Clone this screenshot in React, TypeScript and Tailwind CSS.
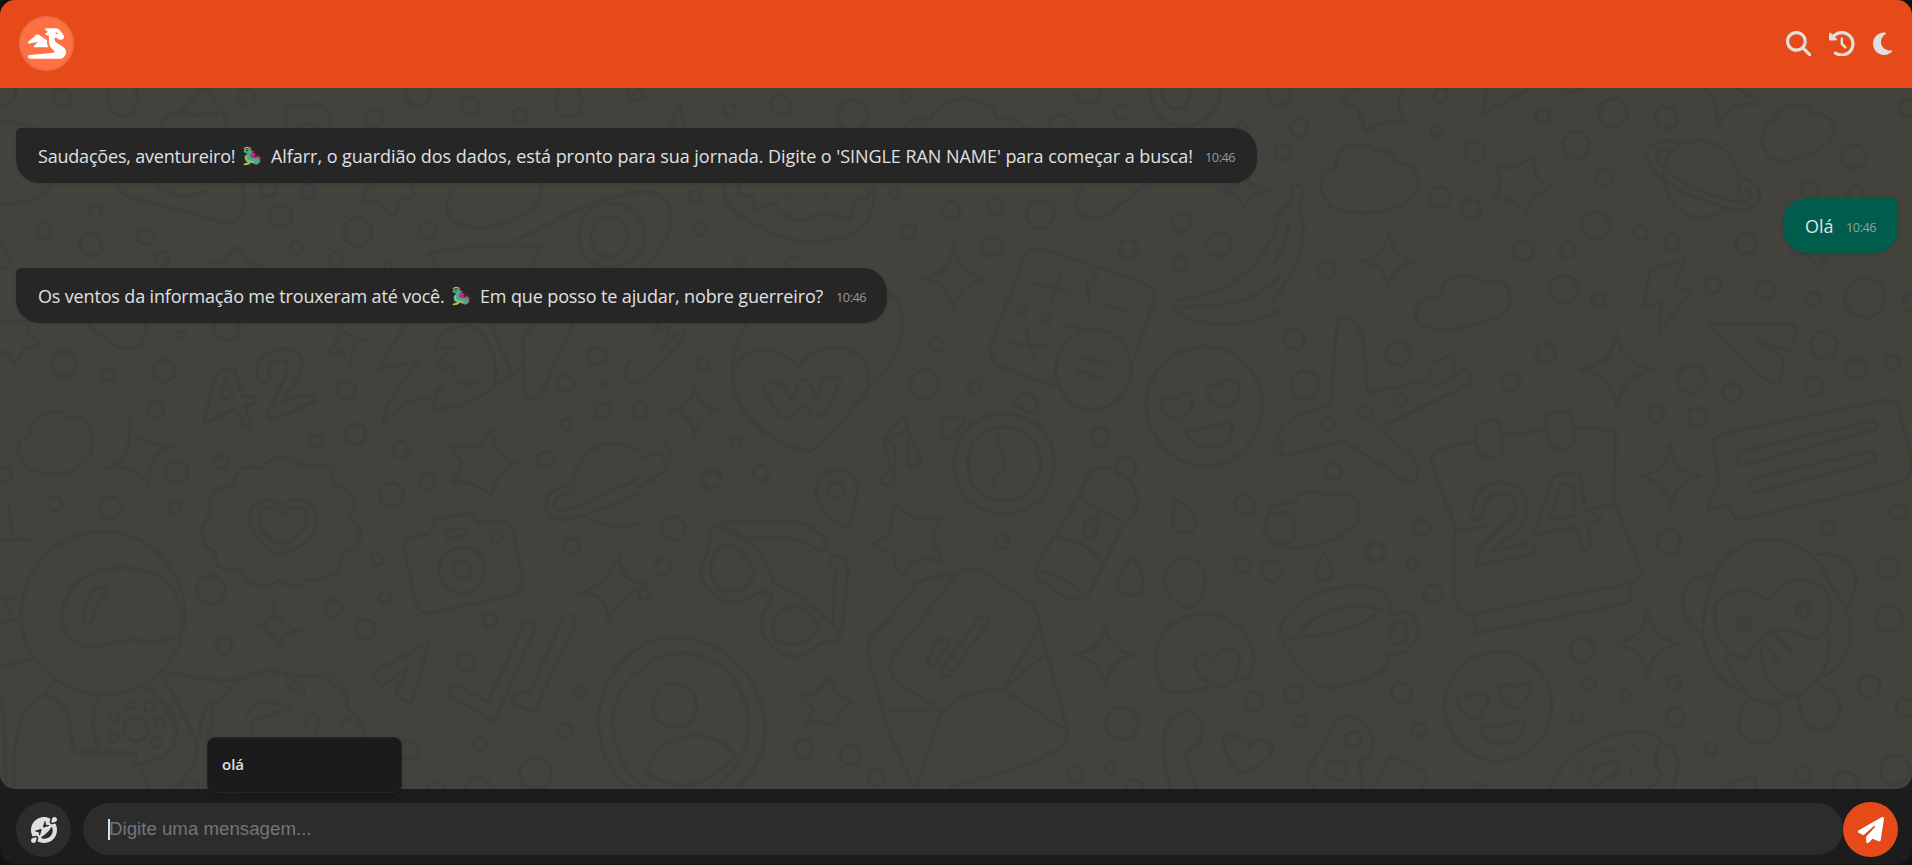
import { FaMagnifyingGlass, FaClockRotateLeft, FaMoon, FaDragon, FaFaceGrinSquintTears, FaPaperPlane } from "react-icons/fa6";

type Tile = { x: number; y: number; circles: number[][]; paths: string[] };

const star4 = (x: number, y: number, w: number, h: number, t = 0) =>
  `M${x + t} ${y - h}Q${x + w * 0.12} ${y - h * 0.12} ${x + w} ${y - t}Q${x + w * 0.12} ${y + h * 0.12} ${x - t} ${y + h}Q${x - w * 0.12} ${y + h * 0.12} ${x - w} ${y + t}Q${x - w * 0.12} ${y - h * 0.12} ${x + t} ${y - h}Z`;

/* Doodles are laid out on tiles of 2.45 x 3 units per pixel. */
const tiles: Tile[] = [
  {
    x: 0, y: 80,
    circles: [
      [152, 53, 9], [604, 52, 8], [1024, 42, 12], [1152, 78, 9], [1273, 106, 7], [918, 114, 9], [0, 30, 16],
      [235, 393, 6], [222, 495, 11], [356, 469, 8], [397, 535, 7], [658, 327, 8], [754, 335, 7], [688, 407, 11],
      [876, 456, 14], [1048, 450, 9], [728, 502, 6], [824, 535, 7], [157, 852, 13], [265, 886, 6], [403, 872, 11],
      [555, 740, 13], [443, 765, 4], [850, 932, 9], [381, 990, 8], [871, 1062, 10], [775, 1082, 6], [982, 1108, 8],
      [1463, 828, 9], [1387, 908, 8], [1477, 993, 8], [1387, 1033, 5], [1474, 912, 3], [1336, 1138, 8], [542, 1146, 7], [433, 1176, 11],
      [1555, 42, 7],
    ],
    paths: [
      "M267 24C255 70 275 108 300 108C330 108 345 70 332 24",
      "M1370 30C1350 75 1370 110 1393 110C1425 110 1435 65 1415 30",
      "M395 144C400 105 420 100 440 100L490 30Q500 15 515 35L535 80Q542 98 550 105L552 144M440 100Q490 112 530 98",
      "M700 144L702 90Q720 65 742 85Q765 60 800 85Q815 100 808 144M722 144Q745 120 780 144",
      "M0 128C60 120 110 150 130 200C180 300 100 380 0 370",
      "M285 300Q290 345 330 355L560 430C600 420 610 350 590 310M380 308C400 350 460 360 500 335",
      "M100 420Q90 440 92 460C100 485 125 480 125 455Q125 440 100 420Z",
      "M0 490Q30 530 20 555Q10 570 0 565",
      "M902 308L889 365Q930 360 937 380L965 410L978 362L1018 348Q1000 330 1010 308",
      "M1108 330Q1080 390 1110 420C1150 460 1210 440 1240 425Q1340 390 1325 308",
      "M1250 490L1380 410Q1470 350 1568 335M1050 520Q1150 490 1320 500Q1320 530 1295 564M1050 520L1080 564",
      "M1492 370C1440 370 1415 420 1418 475C1420 530 1460 562 1492 562C1540 562 1580 520 1580 470C1580 410 1540 370 1492 370ZM1492 408C1460 408 1448 440 1448 475C1450 510 1470 530 1492 530C1520 530 1538 505 1538 470C1538 435 1520 408 1492 408Z",
      "M510 550H545L580 500L610 550L645 560M940 564L950 535L965 564",
      "M210 728Q250 770 285 800C320 820 370 790 355 730M0 720Q30 730 45 728Q70 710 70 760L95 795L60 805L35 850L20 820L0 815",
      "M500 1020L530 880Q545 860 575 870L595 950Q625 945 625 960Q625 975 600 975L615 1030Q610 1050 595 1035L580 985L520 1020Q505 1030 500 1020ZM540 960L553 890L570 950Z",
      "M630 900C620 840 660 800 705 808C750 815 750 870 720 910L690 965L750 945Q780 945 770 965L670 1020Q650 1015 660 990L700 890C715 850 700 835 680 840Q655 850 660 895Q645 915 630 900Z",
      "M835 728Q840 775 900 780Q850 795 860 860L840 815L800 820Q830 800 830 728",
      "M995 730L925 868L1025 845Q935 970 940 1040C970 970 1020 950 1055 955L1085 915L1055 985C1150 990 1190 940 1215 915C1220 830 1200 770 1150 735C1090 740 1060 780 1070 810L1120 800Q1060 850 1080 870L1110 860C1110 920 1150 920 1170 900M1200 730L1255 880L1215 915",
      "M1405 728L1330 930Q1310 975 1285 940L1280 770L1310 730M1280 860L1220 910",
      "M95 1010C130 980 160 1000 165 1015C210 1000 230 1050 228 1085C225 1150 165 1200 105 1180C50 1165 40 1120 45 1095Q50 1070 75 1068Q70 1030 95 1010Z",
      "M315 1015Q325 1100 425 1100Q360 1110 365 1230Q350 1150 258 1165Q330 1150 315 1015Z",
      "M1205 1050L1165 1105Q1130 1090 1105 1100L1130 1150L1110 1210Q1140 1205 1155 1210Q1190 1230 1205 1245L1220 1190L1262 1150Q1220 1130 1215 1100Z",
      "M1530 900Q1525 870 1545 840M1530 900Q1545 910 1568 905",
    ],
  },
  {
    x: 640, y: 80,
    circles: [
      [220, 90, 6], [345, 75, 10], [521, 105, 15], [651, 50, 5], [1180, 97, 7], [134, 353, 6], [147, 445, 7], [0, 45, 6],
      [624, 340, 5], [659, 453, 7], [762, 392, 9], [871, 380, 8], [981, 402, 14], [862, 500, 10], [1196, 507, 9], [1327, 428, 10],
      [1417, 493, 12], [1322, 548, 7], [245, 550, 5], [375, 550, 7], [727, 793, 7], [154, 855, 6], [697, 913, 14], [818, 921, 6],
      [235, 1088, 5], [1127, 1070, 9], [0, 990, 8], [295, 1175, 7], [175, 1195, 9], [1560, 1105, 5], [935, 695, 4], [995, 718, 4], [1568, 50, 11],
    ],
    paths: [
      "M75 144L95 70L110 144M650 135Q670 110 710 120C740 30 860 40 875 115Q920 110 945 144M1000 144C1010 90 1050 90 1065 144",
      "M1065 40Q1080 75 1100 72Q1125 70 1125 35M1250 30C1250 110 1300 144 1340 140C1390 130 1425 80 1420 30M1275 30C1290 80 1300 90 1315 88Q1350 80 1350 30M1460 144L1475 122L1490 144",
      "M0 335C70 325 90 400 65 470Q40 530 10 564M205 310C200 380 240 410 310 450C350 480 400 490 460 480C550 470 570 430 575 320M240 310L245 345L275 350L285 390L330 370Q355 420 400 420L440 400L515 415L525 360Q570 360 560 330M360 345L380 360M445 360L460 345",
      "M1080 325Q1060 380 1075 400C1110 430 1150 410 1170 380L1245 310",
      star4(770, 595, 78, 105), star4(1480, 330, 65, 55), star4(134, 992, 62, 78),
      "M950 515Q960 500 990 508L1235 610Q1265 630 1260 665L1210 840M950 515Q930 540 925 590L860 790Q855 845 885 860L1020 920",
      "M1110 750C1060 745 1020 800 1018 870C1020 940 1060 990 1110 988C1165 985 1205 930 1203 860C1200 790 1160 750 1110 750Z",
      "M1085 830L1145 855M1070 870L1135 900M1110 570L1120 600L1095 600L1100 670M1130 670L1200 700M1050 740H1075V765M965 610L1050 640M1035 570L1005 670M910 790L995 800M945 740L965 840",
      "M1568 400Q1560 480 1500 560Q1430 650 1320 660Q1300 680 1315 700C1390 750 1500 740 1568 690M1568 590Q1490 690 1320 680",
      "M610 640C660 680 650 780 610 860Q590 900 555 930M265 728C220 800 220 900 235 950C260 1030 340 1100 415 1115Q440 1100 550 945C575 880 550 820 500 805Q430 790 385 860Q350 800 270 815Q230 840 230 900",
      "M300 920Q300 905 350 910L370 960L395 900L410 900L435 960L450 890L490 895Q490 910 470 960L450 1005L425 1010L400 970L375 1010L345 1010Z",
      "M1385 800C1310 800 1245 870 1240 965C1240 1080 1310 1160 1390 1158C1465 1155 1525 1075 1525 965C1520 880 1460 800 1385 800Z",
      "M1275 975Q1280 945 1315 955Q1330 930 1350 945C1365 980 1330 1015 1315 1022Q1280 1010 1275 975ZM1390 930Q1400 905 1425 915Q1445 890 1465 905C1480 940 1450 980 1430 985Q1390 970 1390 930ZM1335 1050Q1400 1050 1448 1020C1460 1070 1440 1100 1400 1098C1360 1100 1340 1075 1335 1050Z",
      "M890 1000C820 1000 770 1070 770 1150C770 1250 830 1300 890 1300C960 1300 1015 1240 1015 1150C1015 1060 960 1000 890 1000ZM890 1040C840 1040 803 1090 803 1150C803 1220 840 1262 890 1262C945 1262 982 1210 982 1150C982 1090 940 1040 890 1040Z",
      "M880 1070C870 1110 900 1110 890 1170Q870 1190 865 1210",
      "M645 1010L595 1080L615 1165M645 1010L660 1060L685 1130M600 1080L655 1050M660 1130Q650 1165 675 1160Q695 1150 680 1120",
      "M738 1050Q740 1010 765 1010Q800 1005 795 1030Q760 1080 745 1080Q735 1070 738 1050ZM915 970Q920 940 950 940Q980 960 975 1000L950 998Z",
      "M45 728L30 760L75 740L55 800L110 750Q110 790 0 905",
    ],
  },
  {
    x: 1272, y: 80,
    circles: [
      [415, 45, 7], [66, 143, 9], [28, 217, 8], [404, 152, 6], [496, 215, 10], [663, 108, 7], [836, 98, 14], [966, 113, 11], [745, 195, 13],
      [814, 294, 9], [411, 352, 10], [487, 388, 10], [793, 437, 14], [904, 460, 7], [980, 484, 8], [616, 512, 10], [724, 508, 8], [133, 570, 8],
      [714, 627, 14], [799, 658, 7], [1080, 614, 8], [1208, 630, 9], [1326, 658, 7], [1161, 491, 10], [1426, 229, 12], [1318, 330, 9], [1430, 345, 8],
      [1453, 653, 20], [1568, 667, 9], [1352, 795, 13], [1431, 867, 10], [1520, 847, 7], [1328, 920, 9], [1028, 898, 14], [1127, 938, 9], [942, 1003, 8],
      [1041, 1010, 9], [671, 820, 10], [586, 906, 9], [308, 820, 12], [55, 777, 10], [81, 914, 14], [228, 997, 7], [317, 960, 6], [136, 1033, 7], [150, 1173, 8], [1555, 85, 8], [17, 40, 12],
    ],
    paths: [
      "M205 24Q170 50 172 70Q215 80 215 110L230 155Q270 120 325 122Q300 80 320 24M530 24L512 105L635 24M715 30Q735 45 760 30M1060 24Q1090 50 1090 100L1095 138Q1110 60 1203 72L1140 24",
      "M155 270Q160 190 210 195Q240 195 250 215Q290 200 305 245C360 255 365 300 350 340C310 410 190 410 145 380Q110 330 120 295Q130 265 155 270Z",
      "M545 260Q600 270 610 250L640 228L648 295L685 320Q650 345 640 350L622 402Q600 350 545 358Q570 310 545 260Z",
      "M1230 120C1240 70 1310 55 1325 100C1380 100 1390 160 1360 190C1310 235 1260 260 1220 230C1180 190 1210 125 1230 120Z",
      "M960 290C960 210 1000 180 1050 182C1110 185 1150 250 1143 345M960 290C965 370 1010 415 1050 412Q1090 410 1115 385",
      "M1000 185Q940 175 920 210C900 260 980 330 1080 370C1140 400 1190 400 1195 350C1200 310 1160 300 1143 290M985 210Q930 200 945 245C990 310 1080 355 1140 365Q1190 360 1165 330",
      "M415 650C410 580 480 565 525 610C580 585 595 650 575 690C530 740 400 770 360 730C335 680 370 650 415 650Z",
      "M925 570L1012 538L985 620L1025 635L948 762L955 665L912 680Z",
      "M1070 730L1280 735Q1290 760 1268 815L1190 785L1255 835L1245 900Q1230 915 1210 900Z",
      star4(286, 543, 66, 85), star4(845, 870, 90, 110), star4(975, 1190, 75, 95), "M1270 524L1310 524L1340 570L1360 524",
      "M0 420Q20 390 45 370L50 320Q70 310 80 330L65 380C90 430 80 550 0 665M0 560Q35 490 42 425",
      "M145 970L160 715Q210 705 225 790L235 940L380 900M445 895L470 870Q495 880 480 915L260 1045C340 1120 365 1150 355 1185Q350 1220 330 1205L180 1085L30 1125Q0 1120 12 1080Q20 1030 60 1010L145 970",
      "M380 895L395 850L435 825Q450 830 445 890L400 925Z",
      "M500 1040Q520 1010 555 1025Q570 1080 565 1120Q540 1140 510 1125Q495 1080 500 1040ZM672 1010Q690 985 730 1000Q745 1050 740 1090Q715 1120 685 1100Q668 1060 672 1010Z",
      "M500 1085Q385 1105 390 1140L450 1350Q440 1550 455 1580Q480 1610 500 1600L880 1510Q905 1500 905 1470L840 1275L842 1050L745 1042M568 1065L675 1050M450 1350L520 1340M840 1275L775 1285",
      "M490 1605L500 1660L870 1570Q885 1560 875 1520",
      "M490 1310C490 1230 530 1200 570 1208C620 1215 640 1280 610 1340L535 1415L620 1390Q655 1395 640 1425L500 1455L510 1400L590 1310C610 1250 580 1240 550 1240Q520 1250 515 1310Q500 1330 490 1310Z",
      "M645 1350L690 1190Q720 1175 755 1185L768 1290L805 1310Q810 1325 775 1335L780 1400Q765 1420 755 1395L745 1340L660 1360Q645 1365 645 1350ZM680 1320L710 1210L740 1220L742 1305Z",
      "M1080 1090Q1085 1070 1110 1060L1500 960Q1530 960 1535 990L1568 1130Q1570 1190 1545 1205L1145 1320Q1130 1320 1120 1275L1065 1295L1095 1200Z",
      "M1150 1115L1470 1022Q1490 1035 1475 1050L1155 1155Q1130 1150 1150 1115ZM1180 1195L1460 1115Q1490 1125 1475 1145L1190 1235Q1155 1230 1180 1195Z",
    ],
  },
  {
    x: 0, y: 440,
    circles: [
      [134, 191, 7], [270, 202, 11], [429, 201, 6], [517, 449, 14], [960, 165, 12], [1047, 125, 8], [925, 357, 6], [944, 474, 6], [817, 505, 9],
      [896, 568, 10], [549, 615, 8], [1400, 319, 8], [1201, 541, 7], [1141, 666, 9], [1420, 755, 6], [1386, 872, 7], [1174, 912, 7], [1312, 1000, 16], [1000, 930, 10],
      [1172, 1050, 13], [1068, 1055, 10], [9, 105, 8], [333, 867, 12], [319, 794, 4], [365, 800, 5], [280, 832, 5], [392, 848, 5], [280, 892, 5], [381, 908, 5],
      [1132, 390, 23], [1132, 390, 9], [1216, 290, 5],
    ],
    paths: [
      "M250 275C130 275 50 400 52 530C55 670 150 765 260 765C370 760 455 650 452 520C450 390 370 275 250 275Z",
      "M155 560C140 450 210 385 300 383C380 385 440 430 445 530L440 590Q390 610 320 598C260 610 190 660 155 560ZM205 520C210 460 240 435 255 440Q270 450 240 490L225 550Q195 560 205 520Z",
      "M0 300H70Q40 300 30 280L20 190M0 470L45 480M15 490L35 540M0 550Q25 540 50 540M0 680L75 660M0 760C20 900 10 960 15 1047M35 1047C30 850 60 780 110 765C160 780 175 830 178 935L330 938Q340 960 325 970C370 980 460 930 425 830Q400 780 350 740M240 770C220 840 230 900 245 930M395 700Q450 820 480 900Q500 970 420 1047M345 985L365 1047M110 765L130 720M370 740L420 840",
      "M395 690Q560 740 600 710C670 670 720 720 760 710C830 680 860 760 850 800Q885 840 895 890M600 710Q550 750 540 785C500 790 485 850 490 890M520 790Q525 850 510 890M605 825Q620 780 665 785L710 800L615 845V880M700 710Q750 740 745 765Q710 760 700 710ZM790 710Q850 760 845 780M745 870Q750 825 770 825Q790 840 770 880M835 860Q840 830 860 840",
      "M520 220C500 170 530 135 570 140C570 90 600 70 640 85C670 40 720 45 740 80C790 60 820 90 818 130C870 150 885 190 855 235C900 270 890 320 840 340C840 400 800 425 755 420C730 450 700 440 685 420C650 450 600 440 590 390C540 400 520 370 530 340C480 310 490 250 520 220Z",
      "M690 200C655 165 610 180 612 230C610 290 660 340 685 345C740 330 785 280 775 220C765 170 715 170 690 200ZM695 225C680 195 640 195 635 230C635 280 670 310 690 315C725 300 760 260 750 225C745 190 705 200 695 225Z",
      "M1000 295L1055 280Q1060 240 1075 235L1150 220Q1165 225 1170 250L1235 240Q1255 245 1260 290L1280 420Q1280 450 1260 465L1050 520Q1025 520 1020 490L990 330Q985 305 1000 295ZM1090 285Q1095 265 1150 265Q1155 280 1100 300Z",
      "M1400 130Q1420 25 1490 10Q1530 5 1568 35M1395 135C1320 150 1320 235 1380 240Q1450 220 1568 160M1400 160Q1350 165 1360 205Q1370 220 1410 200L1568 115M1430 225Q1500 280 1568 245",
      star4(1505, 445, 85, 105, 14), star4(678, 565, 55, 68, -8),
      "M1052 605L920 695Q910 720 935 740L1000 680L970 760Q990 790 1010 785Z",
      "M1285 550Q1305 540 1310 570L1210 845L1100 765Q1095 730 1120 735L1195 785ZM1380 530Q1405 515 1410 550L1310 810Q1285 815 1255 780Q1260 750 1300 755Z",
      "M440 1047Q450 1010 480 1030L490 1047",
      "M1568 620C1510 670 1470 740 1467 830C1465 940 1500 1010 1550 1047M1568 690Q1505 750 1500 850C1510 950 1540 1020 1590 1047",
    ],
  },
  {
    x: 640, y: 440,
    circles: [
      [174, 119, 9], [295, 99, 8], [81, 265, 12], [57, 381, 8], [480, 151, 8], [887, 305, 7], [1482, 195, 10], [1476, 376, 8], [1547, 392, 10], [1568, 265, 16],
      [401, 926, 9], [515, 945, 10], [579, 1015, 8], [1067, 1004, 8], [1152, 983, 6], [1181, 850, 16], [1505, 783, 9], [1211, 1045, 9], [10, 463, 5], [85, 797, 22], [1190, 82, 10],
    ],
    paths: [
      "M0 690C80 600 180 640 230 720C300 840 260 980 180 1047M0 620C100 550 230 620 280 740C340 880 290 1000 230 1047M15 990C50 870 180 850 235 950Q160 1040 100 1035Q40 1030 15 990Z",
      "M60 10C90 40 80 90 0 140M0 60Q50 20 60 60",
      "M510 265C450 230 420 170 435 125C450 80 520 70 533 140Q525 220 510 265Z",
      "M200 245H380C430 260 465 300 455 325Q440 345 415 310Q390 290 240 293L190 260ZM170 290Q165 255 200 250C280 310 310 350 325 420Q360 460 380 460L490 570Q495 600 470 605C430 600 420 650 375 650C310 640 280 550 305 510Q345 450 290 455C220 530 140 460 150 370Q175 330 170 290Z",
      "M205 318C170 330 160 420 200 450C240 470 290 430 275 380C260 340 235 315 205 318ZM370 500C330 510 310 580 340 605C380 630 445 590 435 550C420 520 400 490 370 500ZM465 380Q460 345 485 347Q510 350 510 390L495 570L470 555L480 385",
      "M625 190L675 240L735 230Q715 290 720 310L740 365Q695 350 670 365L640 410Q620 380 625 345L570 310L610 285Z",
      "M595 0L625 20V90Q595 90 590 125Q600 145 620 125L625 90M660 10Q645 75 675 75Q700 60 675 20",
      "M560 620Q560 590 600 550L680 430Q710 400 770 410Q800 370 840 395L940 475Q980 505 980 560L1045 860Q1055 900 1020 930Q960 980 760 1040M560 620C560 700 590 760 600 850L670 1040M770 410L620 650Q600 690 635 730L740 810H600M740 810L675 1045M980 560L890 745Q780 750 740 820M890 750L1045 870M890 750L985 650",
      "M825 540Q845 520 855 545L760 705Q735 715 740 690ZM725 605Q750 585 760 610L720 680Q700 685 705 660Z",
      "M1110 90C1170 70 1220 120 1218 190Q1215 230 1185 250L1095 470Q1080 485 1040 470Q980 430 965 390L1075 170Q1090 110 1110 90ZM1075 175L1185 245M1015 290Q1080 300 1125 355M965 390Q1040 400 1085 470M1090 250L1120 225V280Q1100 305 1085 285Z",
      "M1310 175L1305 255Q1325 290 1355 270Q1380 230 1310 175ZM1205 350Q1160 430 1175 455Q1205 480 1230 450Q1245 410 1205 350ZM1330 352C1290 355 1270 430 1300 470C1335 520 1370 510 1380 460C1395 400 1370 350 1330 352Z",
      star4(1140, 645, 75, 95),
      "M1390 740C1340 770 1280 760 1275 730C1240 600 1300 520 1390 520C1450 525 1520 600 1500 690Q1490 720 1460 720M1430 745C1360 720 1345 660 1370 645Q1400 645 1405 665Q1430 610 1465 635C1480 680 1450 730 1430 745Z",
      "M1300 1047C1270 900 1280 850 1320 820C1360 800 1390 830 1370 910L1335 945L1365 1047",
      "M1470 1000Q1420 930 1430 890Q1460 870 1490 920Q1520 880 1550 920C1550 970 1490 990 1470 1000Z",
      "M395 765Q430 770 445 740L465 715L480 765L520 785L485 815V860Q450 840 405 850L425 810Z",
    ],
  },
  {
    x: 1272, y: 440,
    circles: [
      [368, 262, 8], [254, 336, 9], [345, 373, 6], [393, 461, 9], [53, 764, 9], [317, 759, 10], [71, 845, 6], [360, 869, 7], [760, 630, 12], [775, 731, 7],
      [867, 765, 5], [985, 728, 7], [745, 832, 6], [988, 831, 9], [1074, 928, 6], [972, 307, 12], [1363, 262, 7], [1532, 216, 8], [1510, 383, 11], [1512, 537, 13],
      [1463, 738, 11], [1551, 803, 9], [1299, 1002, 8], [1527, 990, 15], [1405, 1030, 12], [199, 899, 8], [158, 991, 10], [1156, 550, 8], [1303, 510, 8], [1156, 550, 4], [1303, 510, 4],
    ],
    paths: [
      "M0 200Q20 185 50 190Q80 130 135 170C200 140 225 200 210 240C170 310 60 340 0 310Q-30 260 0 200",
      "M125 340Q95 395 115 420Q140 430 150 395Q145 370 125 340Z",
      "M20 590C10 520 90 460 170 440C260 430 290 450 290 515M55 600C100 510 200 480 265 510Q240 550 150 580L25 600C70 690 90 740 140 745C220 730 290 700 285 640C330 650 370 600 355 550Q340 500 290 525M265 510L290 525M290 600Q285 550 315 545Q345 560 325 605Q300 620 290 600Z",
      "M550 635C470 640 420 720 423 805C430 900 490 965 555 963C630 960 690 880 685 785C680 700 620 635 550 635Z",
      "M455 780Q460 760 490 770Q515 750 530 770C530 810 505 830 495 838Q460 820 455 780ZM555 750Q570 725 595 740Q620 720 632 740C630 780 610 800 595 805Q560 790 555 750ZM508 865Q570 865 612 835Q625 870 600 900C560 930 520 900 508 865Z",
      star4(920, 610, 80, 100),
      "M1085 405C1100 340 1170 290 1230 298C1310 310 1350 370 1370 440C1440 530 1430 650 1355 710M1085 405C1060 480 1050 560 1060 620C1080 690 1110 740 1155 755M1085 405C1020 400 990 460 1015 530Q1030 570 1055 580M1330 345C1400 330 1440 390 1430 440Q1425 480 1405 495",
      "M1160 655C1190 590 1230 560 1270 570L1325 600L1365 575M1085 500C1100 440 1190 440 1215 485C1250 400 1340 400 1365 470C1380 550 1350 590 1325 600M1085 500C1080 600 1110 640 1160 655M1125 640Q1100 660 1125 690L1170 775Q1215 800 1240 785L1280 770C1360 720 1370 650 1365 575M1200 600C1190 690 1220 760 1280 770M1230 580L1275 640M1205 610L1240 665",
      "M1170 775C1140 810 1130 870 1165 900C1200 925 1250 900 1245 840Q1240 800 1230 785M1290 770C1295 840 1310 870 1345 872C1390 865 1410 790 1370 750L1340 735",
      "M85 1000L160 840Q180 820 210 840Q260 880 245 920Q235 960 215 960L220 1047M85 1000Q90 1030 105 1047M245 1047L290 950Q380 985 380 1020L365 1047",
      "M680 1047C720 930 830 860 930 880Q960 890 945 930Q930 980 955 1000Q945 1030 920 1047M955 910Q1000 930 995 985L980 1047M780 1010Q790 970 845 965Q865 985 800 1035Q775 1040 780 1010ZM815 930L840 935M885 920L905 935M760 970L750 990M880 980V1005",
      "M1095 1047L1180 1005L1190 1047M495 1047Q500 1010 530 1047",
    ],
  },
];

function Doodles() {
  return (
    <svg className="pointer-events-none absolute inset-0 h-full w-full" viewBox="0 88 1912 701" preserveAspectRatio="xMinYMin slice" aria-hidden="true">
      <g fill="none" stroke="#403e3c" strokeWidth="3.2" strokeLinejoin="round" strokeLinecap="round">
        {tiles.map((t, i) => (
          <g key={i}>
            {t.circles.map(([cx, cy, r], j) => (
              <circle key={j} cx={t.x + cx / 2.45} cy={t.y + cy / 3} r={r} />
            ))}
            <g transform={`translate(${t.x} ${t.y}) scale(${1 / 2.45} ${1 / 3})`}>
              {t.paths.map((d, j) => (
                <path key={j} d={d} vectorEffect="non-scaling-stroke" />
              ))}
            </g>
          </g>
        ))}
      </g>
    </svg>
  );
}

function DragonEmoji() {
  return (
    <svg viewBox="0 0 20 20" className="h-5 w-5 shrink-0" role="img" aria-label="dragão">
      <path d="M9 4l3 1-1 2 3 1-2 2 2 1 2-2 1 2 2 0-1 3 1 2-3 1-8-7z" fill="#c42d7d" />
      <path d="M1.5 5.5Q2 2.5 6 2.5Q10 3 9.5 6.5Q9 8.5 8 9.5Q8 11 11 12Q14 13.200 15 11.500Q18 13 17.500 16Q17 19 13.500 18.500Q10.500 17.500 9.500 16Q8 19.500 1 19Q1.500 17.500 5 16.500Q1.500 13.500 3 10Q4.500 8.500 5 7Q2.500 7.500 1.500 5.500Z" fill="#43aa8b" />
      <path d="M2 3Q4 .8 6 1.500L9 2.500M4.500 9.500Q3 13 6.500 15L12 16.500M2 18.500Q6 18.500 8 16.500" fill="none" stroke="#d6b04a" strokeWidth="1.300" />
      <circle cx="5" cy="4.500" r=".8" fill="#202020" />
    </svg>
  );
}

export default function App() {
  return (
    <div className="flex h-[865px] w-full flex-col overflow-hidden bg-[#121212] font-['Open_Sans',sans-serif] text-[#e0e0e0]">
      <div className="flex h-[864px] flex-col overflow-hidden rounded-[15px] bg-[#1c1c1c]">
        <header className="flex h-[88px] shrink-0 items-center justify-between bg-[#e64a19] pr-5 pl-[19px]">
          <div className="mb-px flex size-[55px] items-center justify-center rounded-full border-2 border-[#ec6e47] bg-[#ff7043]">
            <FaDragon className="h-[31px] w-[38px] text-white" />
          </div>
          <div className="mb-px flex items-center gap-[18px] text-[25.6px]">
            <FaMagnifyingGlass />
            <FaClockRotateLeft />
            <FaMoon className="h-[25.6px] w-[19.2px]" />
          </div>
        </header>

        <main className="relative h-[701px] shrink-0 overflow-hidden rounded-b-[15px] bg-[#44423d]">
          <Doodles />
          <div className="relative flex flex-col gap-[15px] pt-10 pr-[14px] pl-4 text-[18px] whitespace-nowrap">
            <div className="flex h-[55px] w-[1241px] items-center rounded-[24px] rounded-tl-[5px] bg-[#262626] pt-px pl-[22px] shadow-sm">
              <span className="w-[198px] tracking-[-0.2px]">Saudações, aventureiro!</span>
              <span className="w-[35px] pl-[6px]"><DragonEmoji /></span>
              <span className="w-[934px] tracking-[-0.05px]">Alfarr, o guardião dos dados, está pronto para sua jornada. Digite o 'SINGLE RAN NAME' para começar a busca!</span>
              <span className="pt-1 text-[12.8px] tracking-[-0.5px] text-[#999]">10:46</span>
            </div>
            <div className="flex h-[55px] w-[115px] items-center self-end rounded-[24px] rounded-tr-[5px] bg-[#005c4b] pt-px pl-[22px] shadow-sm">
              <span className="w-[41px]">Olá</span>
              <span className="pt-1 text-[12.8px] tracking-[-0.5px] text-[#8aa59f]">10:46</span>
            </div>
            <div className="flex h-[55px] w-[871px] items-center rounded-[24px] rounded-tl-[5px] bg-[#262626] pt-px pl-[22px] shadow-sm">
              <span className="w-[407px] tracking-[-0.16px]">Os ventos da informação me trouxeram até você.</span>
              <span className="w-[35px] pl-[6px]"><DragonEmoji /></span>
              <span className="w-[356px] tracking-[-0.13px]">Em que posso te ajudar, nobre guerreiro?</span>
              <span className="pt-1 text-[12.8px] tracking-[-0.5px] text-[#999]">10:46</span>
            </div>
          </div>
        </main>

        <footer className="relative flex h-[75px] shrink-0 items-center pt-[6px] pr-[14px] pl-4">
          <button className="mr-3 flex size-[55px] shrink-0 items-center justify-center rounded-full bg-[#2c2c2c]">
            <FaFaceGrinSquintTears className="size-[26px]" />
          </button>
          <div className="mb-px flex h-[52px] flex-1 items-center rounded-[26px] bg-[#2c2c2c] pl-[25px]">
            <span className="h-[21px] w-[2px] bg-[#e0e0e0]" />
            <span className="-ml-px font-['Liberation_Sans',sans-serif] text-[18.7px] text-[#757575]">Digite uma mensagem...</span>
          </div>
          <button className="flex size-[55px] shrink-0 items-center justify-center rounded-full bg-[#e64a19]">
            <FaPaperPlane className="size-[26px] text-white" />
          </button>
          <div className="absolute -top-[52px] left-[207px] h-[56px] w-[195px] rounded-[8px] border border-[#252527] bg-[#1b1b1d] shadow-md">
            <div className="flex h-full items-center pb-px pl-[14px] text-[15px] font-semibold">olá</div>
            <svg viewBox="0 0 20 10" className="absolute top-[55px] left-[15px] h-[10px] w-5"><path d="M0 0H20L10 10Z" fill="#1b1b1d" /></svg>
          </div>
        </footer>
      </div>
    </div>
  );
}
